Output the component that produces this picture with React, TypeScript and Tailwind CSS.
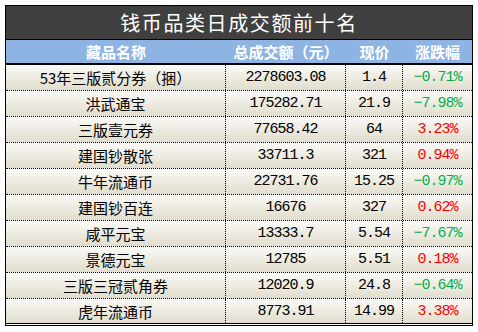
import React from "react";

const rows: [string, string, string, string][] = [
  ["53年三版贰分券（捆）", "2278603.08", "1.4", "-0.71%"],
  ["洪武通宝", "175282.71", "21.9", "-7.98%"],
  ["三版壹元券", "77658.42", "64", "3.23%"],
  ["建国钞散张", "33711.3", "321", "0.94%"],
  ["牛年流通币", "22731.76", "15.25", "-0.97%"],
  ["建国钞百连", "16676", "327", "0.62%"],
  ["咸平元宝", "13333.7", "5.54", "-7.67%"],
  ["景德元宝", "12785", "5.51", "0.18%"],
  ["三版三冠贰角券", "12020.9", "24.8", "-0.64%"],
  ["虎年流通币", "8773.91", "14.99", "3.38%"],
];

export default function App() {
  return (
    <div className="w-[478px] h-[332px] bg-white pt-[5px] pl-[5px]">
      <div className="w-[468px] border-double border-black border-l border-r border-t border-b-[3px]">
        <div className="h-[34px] bg-[#404040] border-b border-solid border-black flex items-center justify-center text-white text-[20px] tracking-[1.6px] leading-none font-['Noto_Sans_CJK_SC',sans-serif]">
          钱币品类日成交额前十名
        </div>
        <div className="grid grid-cols-[220px_120px_57px_69px] h-[25px] bg-[#8db4e2] border-b-2 border-solid border-black text-white font-bold text-[15px] leading-none font-['Noto_Sans_CJK_SC',sans-serif]">
          <div className="flex items-center justify-center">藏品名称</div>
          <div className="flex items-center justify-center">总成交额（元）</div>
          <div className="flex items-center justify-center">现价</div>
          <div className="flex items-center justify-center">涨跌幅</div>
        </div>
        {rows.map((r, i) => {
          const neg = r[3].startsWith("-");
          const last = i === rows.length - 1;
          return (
            <div
              key={i}
              className={
                "grid grid-cols-[220px_120px_57px_69px] bg-gradient-to-b from-[#fafaf6] to-[#e1ddcd] " +
                (last ? "h-[24px]" : "h-[26px] border-b border-dotted border-black")
              }
            >
              <div className="flex items-center justify-center border-r border-dotted border-black text-[15px] text-black leading-none font-['Noto_Sans_CJK_SC',sans-serif]">
                {r[0]}
              </div>
              <div className="flex items-center justify-center border-r border-dotted border-black text-[15px] tracking-[-1px] text-black leading-none font-['Liberation_Mono',monospace]">
                {r[1]}
              </div>
              <div className="flex items-center justify-center border-r border-dotted border-black text-[15px] tracking-[-1px] text-black leading-none font-['Liberation_Mono',monospace]">
                {r[2]}
              </div>
              <div
                className={
                  "flex items-center justify-center text-[15px] tracking-[-1px] leading-none font-['Liberation_Mono',monospace] " +
                  (neg ? "text-[#00b050]" : "text-[#ff0000]")
                }
              >
                {neg ? "−" + r[3].slice(1) : r[3]}
              </div>
            </div>
          );
        })}
      </div>
    </div>
  );
}
